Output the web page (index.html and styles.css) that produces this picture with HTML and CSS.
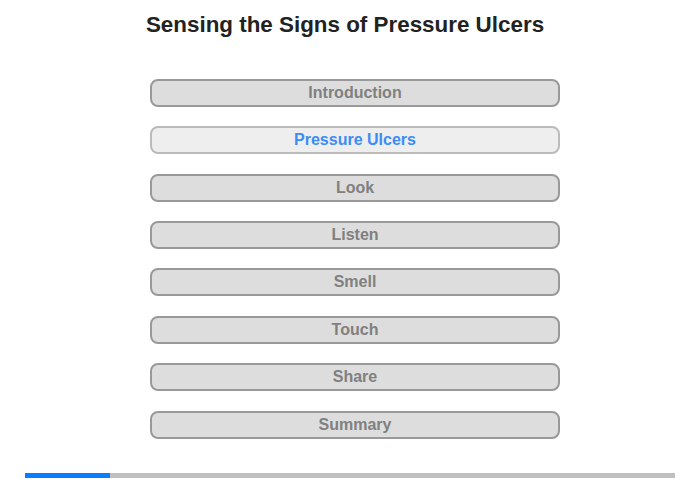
FILE: index.html
```html
<!DOCTYPE html>
<html lang="en">
<head>
<meta charset="utf-8">
<title>Sensing the Signs of Pressure Ulcers</title>
<link rel="stylesheet" href="styles.css">
</head>
<body>
  <div class="page">
    <h1 class="title">Sensing the Signs of Pressure Ulcers</h1>
    <nav class="menu">
      <button class="menu-btn">Introduction</button>
      <button class="menu-btn active">Pressure Ulcers</button>
      <button class="menu-btn">Look</button>
      <button class="menu-btn">Listen</button>
      <button class="menu-btn">Smell</button>
      <button class="menu-btn">Touch</button>
      <button class="menu-btn">Share</button>
      <button class="menu-btn">Summary</button>
    </nav>
    <div class="progress"><div class="progress-fill"></div></div>
  </div>
</body>
</html>
```

FILE: styles.css
```css
html, body {
  margin: 0;
  padding: 0;
  background: #ffffff;
}

body {
  font-family: "Liberation Sans", Arial, sans-serif;
  width: 700px;
  height: 480px;
  overflow: hidden;
}

.page {
  display: flex;
  flex-direction: column;
}

.title {
  margin: 12px 0 0 0;
  padding-right: 10px;
  font-size: 22.4px;
  font-weight: bold;
  line-height: normal;
  color: #222222;
  text-align: center;
}

.menu {
  display: flex;
  flex-direction: column;
  align-items: center;
  gap: 19.43px;
  margin-top: 40.8px;
  padding-left: 10px;
}

.menu-btn {
  box-sizing: border-box;
  width: 410px;
  height: 28px;
  margin: 0;
  padding: 0;
  border: 2px solid #999999;
  border-radius: 8px;
  background: #dddddd;
  color: #808080;
  font-family: "Liberation Sans", Arial, sans-serif;
  font-size: 16px;
  font-weight: bold;
  line-height: 24px;
  text-align: center;
}

.menu-btn.active {
  background: #eeeeee;
  border-color: #bbbbbb;
  color: #3b8cf5;
}

.progress {
  margin: 33.8px 25px 0 25px;
  height: 5px;
  background: #c0c0c0;
}

.progress-fill {
  width: 85px;
  height: 100%;
  background: #0a7dff;
}
```
